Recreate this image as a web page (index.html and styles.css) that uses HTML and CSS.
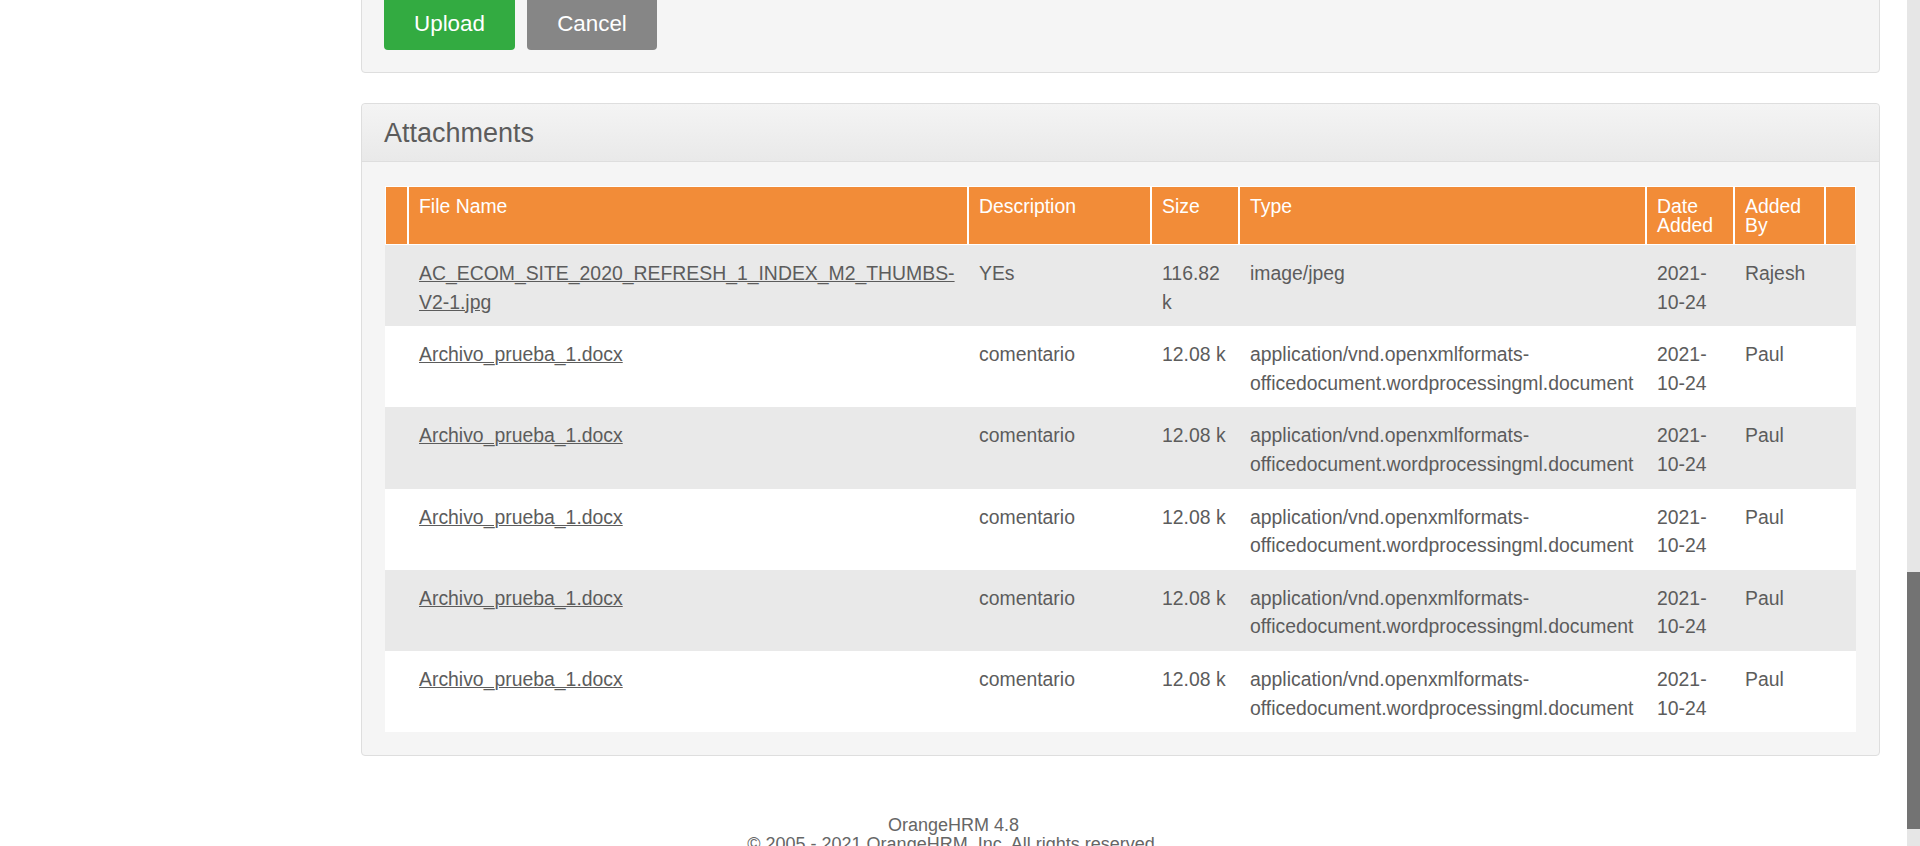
FILE: index.html
```html
<!DOCTYPE html>
<html lang="en">
<head>
<meta charset="utf-8">
<title>Attachments</title>
<link rel="stylesheet" href="styles.css">
</head>
<body>
<div class="page">
  <main class="main">
    <div class="content">
      <section class="panel panel-top">
        <div class="actions">
          <button class="btn btn-upload" type="button">Upload</button>
          <button class="btn btn-cancel" type="button">Cancel</button>
        </div>
      </section>

      <section class="panel panel-attach">
        <div class="panel-head">
          <h1 class="panel-title">Attachments</h1>
        </div>
        <div class="panel-body">
          <table class="grid">
            <colgroup>
              <col class="c-check">
              <col class="c-name">
              <col class="c-desc">
              <col class="c-size">
              <col class="c-type">
              <col class="c-date">
              <col class="c-by">
              <col class="c-act">
            </colgroup>
            <thead>
              <tr>
                <th></th>
                <th>File Name</th>
                <th>Description</th>
                <th>Size</th>
                <th>Type</th>
                <th>Date Added</th>
                <th>Added By</th>
                <th></th>
              </tr>
            </thead>
            <tbody>
              <tr class="odd">
                <td></td>
                <td><a href="#" class="file">AC_ECOM_SITE_2020_REFRESH_1_INDEX_M2_THUMBS-V2-1.jpg</a></td>
                <td>YEs</td>
                <td>116.82 k</td>
                <td>image/jpeg</td>
                <td>2021-10-24</td>
                <td>Rajesh</td>
                <td></td>
              </tr>
              <tr class="even">
                <td></td>
                <td><a href="#" class="file">Archivo_prueba_1.docx</a></td>
                <td>comentario</td>
                <td>12.08 k</td>
                <td>application/vnd.openxmlformats-officedocument.wordprocessingml.document</td>
                <td>2021-10-24</td>
                <td>Paul</td>
                <td></td>
              </tr>
              <tr class="odd">
                <td></td>
                <td><a href="#" class="file">Archivo_prueba_1.docx</a></td>
                <td>comentario</td>
                <td>12.08 k</td>
                <td>application/vnd.openxmlformats-officedocument.wordprocessingml.document</td>
                <td>2021-10-24</td>
                <td>Paul</td>
                <td></td>
              </tr>
              <tr class="even">
                <td></td>
                <td><a href="#" class="file">Archivo_prueba_1.docx</a></td>
                <td>comentario</td>
                <td>12.08 k</td>
                <td>application/vnd.openxmlformats-officedocument.wordprocessingml.document</td>
                <td>2021-10-24</td>
                <td>Paul</td>
                <td></td>
              </tr>
              <tr class="odd">
                <td></td>
                <td><a href="#" class="file">Archivo_prueba_1.docx</a></td>
                <td>comentario</td>
                <td>12.08 k</td>
                <td>application/vnd.openxmlformats-officedocument.wordprocessingml.document</td>
                <td>2021-10-24</td>
                <td>Paul</td>
                <td></td>
              </tr>
              <tr class="even">
                <td></td>
                <td><a href="#" class="file">Archivo_prueba_1.docx</a></td>
                <td>comentario</td>
                <td>12.08 k</td>
                <td>application/vnd.openxmlformats-officedocument.wordprocessingml.document</td>
                <td>2021-10-24</td>
                <td>Paul</td>
                <td></td>
              </tr>
            </tbody>
          </table>
        </div>
      </section>
    </div>

    <footer class="footer">
      <div>OrangeHRM 4.8</div>
      <div>&copy; 2005 - 2021 OrangeHRM, Inc. All rights reserved.</div>
    </footer>
  </main>
  <aside class="scrollbar">
    <div class="thumb"></div>
  </aside>
</div>
</body>
</html>
```

FILE: styles.css
```css
html, body {
  margin: 0;
  padding: 0;
  height: 100%;
  overflow: hidden;
  background: #ffffff;
}

body {
  font-family: "Liberation Sans", Arial, Helvetica, sans-serif;
  color: #5c5c5c;
}

.page {
  display: flex;
  height: 846px;
  overflow: hidden;
}

.main {
  flex: 1;
  min-width: 0;
  overflow: hidden;
}

.content {
  margin-left: 361px;
  width: 1519px;
}

.panel {
  background: #f5f5f5;
  border: 1px solid #dedede;
  border-radius: 4px;
  box-sizing: border-box;
}

.panel-top {
  margin-top: -24px;
  padding: 20px 22px 22px;
}

.actions {
  display: flex;
  gap: 12px;
}

.btn {
  height: 53px;
  border: none;
  border-radius: 4px;
  padding: 0 30px;
  font-family: "Liberation Sans", Arial, Helvetica, sans-serif;
  font-size: 22.4px;
  color: #ffffff;
  cursor: pointer;
}

.btn-upload {
  background: #33ab41;
  width: 131px;
}

.btn-cancel {
  background: #868686;
  width: 130px;
}

.panel-attach {
  margin-top: 30px;
}

.panel-head {
  padding: 13px 22px 12px;
  background: linear-gradient(#f4f4f4, #e9e9e9);
  border-bottom: 1px solid #dedede;
  border-radius: 4px 4px 0 0;
}

.panel-title {
  margin: 0;
  font-size: 27px;
  font-weight: normal;
  line-height: 32px;
  color: #5c5c5c;
}

.panel-body {
  padding: 24px 23px 23px;
}

.grid {
  width: 100%;
  table-layout: fixed;
  border-collapse: separate;
  border-spacing: 0;
  font-size: 19.4px;
}

.c-check { width: 23px; }
.c-name { width: 560px; }
.c-desc { width: 183px; }
.c-size { width: 88px; }
.c-type { width: 407px; }
.c-date { width: 88px; }
.c-by { width: 91px; }
.c-act { width: 31px; }

.grid th {
  background: #f28c38;
  color: #ffffff;
  font-weight: normal;
  text-align: left;
  vertical-align: top;
  border: 1px solid #ffffff;
  padding: 10px 7px 9px 10px;
  line-height: 19px;
}

.grid td {
  vertical-align: top;
  border: 1px solid transparent;
  padding: 13px 7px 9px 10px;
  line-height: 28.6px;
  color: #5c5c5c;
}

.grid tr.odd td {
  background: #e9e9e9;
}

.grid tr.even td {
  background: #ffffff;
}

.file {
  color: #5c5c5c;
  text-decoration: underline;
}

.footer {
  margin-top: 60px;
  text-align: center;
  font-size: 18px;
  line-height: 19px;
  color: #666666;
}

.scrollbar {
  width: 13px;
  flex: 0 0 13px;
  background: #e6e6e6;
}

.thumb {
  margin-top: 572px;
  height: 257px;
  background: #737373;
}
```
